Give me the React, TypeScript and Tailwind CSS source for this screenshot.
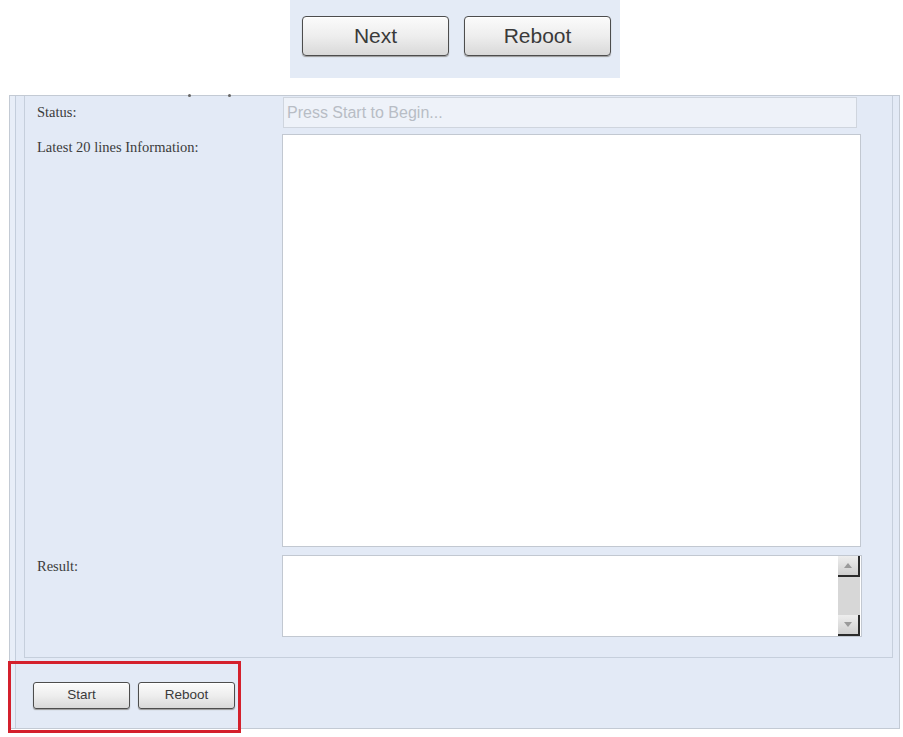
import React from "react";

const sans = { fontFamily: '"Liberation Sans", Arial, sans-serif' };
const serif = { fontFamily: '"Liberation Serif", "Times New Roman", serif' };

function Btn({ label, big }: { label: string; big?: boolean }) {
  return (
    <div
      style={sans}
      className={
        "flex items-center justify-center border border-[#4d4d4d] bg-gradient-to-b from-[#fbfbfb] via-[#eeeeee] to-[#d9d9d9] text-[#3a3a3a] shadow-[inset_0_1px_0_#ffffff,0_1px_1px_#9a9a9a] " +
        (big
          ? "h-[40px] w-[147px] rounded-[4px] text-[21px]"
          : "h-[27px] w-[97px] rounded-[3px] text-[13.5px]")
      }
    >
      {label}
    </div>
  );
}

function ScrollBtn({ up }: { up?: boolean }) {
  return (
    <div className="flex h-[21px] w-full items-center justify-center border-b-2 border-r-2 border-[#2a2a2a] bg-gradient-to-b from-[#eeeeee] to-[#cfcfcf]">
      <div
        className={
          "h-0 w-0 border-l-[4px] border-r-[4px] border-l-transparent border-r-transparent " +
          (up ? "border-b-[5px] border-b-[#9a9a9a]" : "border-t-[5px] border-t-[#9a9a9a]")
        }
      />
    </div>
  );
}

export default function App() {
  return (
    <div className="relative h-[737px] w-[903px] overflow-hidden bg-white">
      {/* top button box */}
      <div className="ml-[290px] flex h-[78px] w-[330px] items-start gap-[15px] bg-[#e4ebf6] pl-[12px] pt-[16px]">
        <Btn label="Next" big />
        <Btn label="Reboot" big />
      </div>

      {/* main panel */}
      <div className="relative ml-[9px] mt-[17px] h-[634px] w-[891px] border border-[#c3cad4] bg-[#e3eaf6] shadow-[inset_5px_0_0_#e8eef8,inset_6px_0_0_#c4cedc]">
        <div className="absolute left-[178px] top-[-2px] h-[3px] w-[3px] rounded-full bg-[#666]" />
        <div className="absolute left-[218px] top-[-2px] h-[3px] w-[3px] rounded-full bg-[#666]" />

        {/* inner fieldset */}
        <div className="ml-[14px] h-[562px] w-[869px] border-b border-l border-r border-[#c6cfdc] bg-[#e3eaf6]">
          {/* status row */}
          <div className="flex pt-[1px]">
            <div style={serif} className="flex h-[31px] w-[257px] items-center pl-[12px] text-[14.5px] text-[#3c3c3c]">
              Status:
            </div>
            <div
              style={sans}
              className="ml-[1px] flex h-[31px] w-[574px] items-center border border-[#cfd5de] bg-[#eef2f9] pl-[3px] text-[16px] text-[#b8bdc5]"
            >
              Press Start to Begin...
            </div>
          </div>

          {/* latest 20 lines row */}
          <div className="mt-[6px] flex">
            <div style={serif} className="w-[257px] pl-[12px] pt-[3px] text-[14.5px] text-[#3c3c3c]">
              Latest 20 lines Information:
            </div>
            <div className="h-[413px] w-[579px] border border-[#c2c8d1] bg-white" />
          </div>

          {/* result row */}
          <div className="mt-[8px] flex">
            <div style={serif} className="w-[257px] pl-[12px] pt-[1px] text-[14.5px] text-[#3c3c3c]">
              Result:
            </div>
            <div className="flex h-[82px] w-[580px] border border-[#c2c8d1] bg-white">
              <div className="flex-1" />
              <div className="mr-[1px] flex w-[22px] flex-col">
                <ScrollBtn up />
                <div className="flex-1 bg-[#d7d7d7]" />
                <ScrollBtn />
              </div>
            </div>
          </div>
        </div>

        {/* footer buttons */}
        <div className="ml-[23px] mt-[24px] flex gap-[8px]">
          <Btn label="Start" />
          <Btn label="Reboot" />
        </div>
      </div>

      {/* red annotation box */}
      <div className="absolute left-[8px] top-[661px] h-[72px] w-[233px] border-[3px] border-[#d4202c]" />
    </div>
  );
}
